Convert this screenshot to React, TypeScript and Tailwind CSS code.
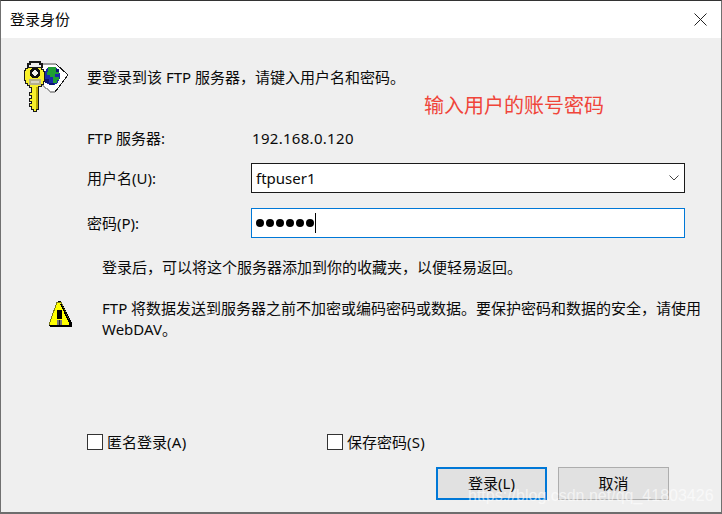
import React from "react";

const COMMA = "\uFF0C";

function KeyIcon() {
  return (
    <svg width="46" height="51" viewBox="0 0 46 51" shapeRendering="crispEdges" className="block">
      {/* diamond page behind the key */}
      <path d="M20 3 H33 L45 14 L32 31 H28 L19 24 Z" fill="#ffffff" />
      <path d="M20 3 H33 M19 24 L28 31 H32" fill="none" stroke="#a0a0a0" strokeWidth="1.5" />
      <path d="M33 3 L45 14 L32 31" fill="none" stroke="#1a1a1a" strokeWidth="1" />
      {/* globe */}
      <ellipse cx="29" cy="15" rx="8" ry="9.5" fill="#1a2aa8" />
      <path d="M25 6h8v2h3v5h-4v3h4v3h-2v3h-4v-6h-3v-2h-3v-3h1z" fill="#1f9e33" />
      <path d="M22 18h4v4h-4zM33 8h3v3h-3zM26 22h5v2h-5z" fill="#0b1470" />
      {/* ring */}
      <path d="M5 7 V3 H7 V1 H17 V3 H19 V7" fill="none" stroke="#1a1a1a" strokeWidth="2" />
      {/* key */}
      <path
        d="M4 6 H18 V8 H20 V10 H21 V20 H20 V23 H18 V25 H15 V48 H13 V50 H10 V48 H8 V45 H6 V42 H8 V40 H6 V37 H8 V34 H6 V31 H8 V26 H6 V24 H4 V22 H2 V19 H1 V9 H2 V7 H4 Z"
        fill="#f8f02a"
        stroke="#1a1a1a"
        strokeWidth="1"
      />
      <rect x="13" y="26" width="2" height="22" fill="#b8a800" />
      <rect x="6" y="18" width="12" height="6" fill="#b4b08c" />
      <rect x="8" y="20" width="8" height="2" fill="#d8d6c4" />
      {/* bow hole */}
      <circle cx="12" cy="12" r="4" fill="#f2f2ee" stroke="#111" strokeWidth="2.5" />
    </svg>
  );
}

function WarnIcon() {
  return (
    <svg width="24" height="27" viewBox="0 0 24 27" shapeRendering="crispEdges" className="block">
      <path d="M9 0 H13 L24 22 V26 H2 V25 H22 V23 L13 3 Z" fill="#000" />
      <path d="M9 1 H13 L22 22 V24 H1 V21 L2 21 Z" fill="#ffff00" stroke="#77771a" strokeWidth="1" />
      <path d="M13 2 L23 23 V25 H1 V24 H21 V22 L12 3 Z" fill="#000" />
      <rect x="9" y="9" width="5" height="9" fill="#000" />
      <rect x="9" y="19" width="5" height="5" fill="#777" />
      <rect x="11" y="19" width="1" height="5" fill="#222" />
    </svg>
  );
}

function Checkbox({ label, hint, className }: { label: string; hint: string; className: string }) {
  return (
    <div className={`flex items-center gap-[4px] ${className}`}>
      <span className="block w-[16px] h-[16px] border-[1px] border-[#333] bg-white" />
      <span>
        {label}
        <span className="tracking-[0.3px]">{hint}</span>
      </span>
    </div>
  );
}

export default function App() {
  return (
    <div
      lang="zh-CN"
      className="relative w-[722px] h-[514px] overflow-hidden bg-[#efefef] text-[15px] leading-[20px] text-[#0a0a0a] border-l border-r border-l-[#707070] border-r-[#707070] border-t border-t-[#333] border-b-[2px] border-b-[#6d6d6d]"
      style={{ fontFamily: '"Noto Sans", "Noto Sans CJK SC", sans-serif' }}
    >
      <div className="h-[37px] bg-white flex items-center justify-between pl-[9px] pr-[14px] pb-[1px]">
        <span className="text-[15px]">登录身份</span>
        <svg width="13" height="13" viewBox="0 0 13 13" className="block">
          <path d="M0.5 0.5 L12.5 12.5 M12.5 0.5 L0.5 12.5" stroke="#222" strokeWidth="1" fill="none" />
        </svg>
      </div>

      <div className="flex pl-[22px] pt-[29px] h-[56px]">
        <div className="w-[64px] shrink-0 -mt-[6px]">
          <KeyIcon />
        </div>
        <div className="whitespace-nowrap">{`要登录到该 FTP 服务器${COMMA}请键入用户名和密码。`}</div>
      </div>

      <div className="pl-[423px] h-[30px] text-[20px] leading-[30px] text-[#f0453a] mt-[-3px]">输入用户的账号密码</div>

      <div className="pl-[86px] pt-[6px] pr-[36px]">
        <div className="flex items-center h-[22px]">
          <span className="w-[165px]">FTP 服务器:</span>
          <span className="tracking-[0.3px]">192.168.0.120</span>
        </div>
        <div className="flex items-center h-[30px] mt-[14px]">
          <span className="w-[164px] pb-[1px]">用户名(U):</span>
          <div className="flex-1 h-[30px] border border-[#1a1a1a] bg-white flex items-center justify-between pl-[4px] pr-[5px]">
            <span>ftpuser1</span>
            <svg width="10" height="6" viewBox="0 0 10 6" className="block">
              <path d="M0.5 0.5 L5 5 L9.5 0.5" stroke="#444" fill="none" />
            </svg>
          </div>
        </div>
        <div className="flex items-center h-[30px] mt-[15px]">
          <span className="w-[164px] pb-[1px]">密码(P):</span>
          <div className="flex-1 h-[30px] border border-[#0078d7] bg-white flex items-center pl-[4px]">
            <span className="flex gap-[2px]">
              {[0, 1, 2, 3, 4, 5].map((i) => (
                <span key={i} className="block w-[8px] h-[8px] rounded-full bg-black" />
              ))}
            </span>
            <span className="block w-[1px] h-[20px] bg-black ml-[1px]" />
          </div>
        </div>
      </div>

      <div className="pl-[101px] mt-[19px] whitespace-nowrap">{`登录后${COMMA}可以将这个服务器添加到你的收藏夹${COMMA}以便轻易返回。`}</div>

      <div className="flex pl-[47px] mt-[21px]">
        <div className="w-[54px] shrink-0 pt-[3px]">
          <WarnIcon />
        </div>
        <div className="w-[612px] leading-[21px]">
          {`FTP 将数据发送到服务器之前不加密或编码密码或数据。要保护密码和数据的安全${COMMA}请使用 WebDAV。`}
        </div>
      </div>

      <div className="flex pl-[86px] mt-[92px]">
        <Checkbox label="匿名登录" hint="(A)" className="w-[240px]" />
        <Checkbox label="保存密码" hint="(S)" className="" />
      </div>

      <div className="flex justify-end gap-[11px] pr-[52px] mt-[15px]">
        <div className="w-[111px] h-[33px] border-[2px] border-[#0078d7] bg-[#e1e1e1] flex items-center justify-center pb-[1px]">登录(L)</div>
        <div className="w-[111px] h-[33px] border border-[#adadad] bg-[#e1e1e1] flex items-center justify-center pb-[1px]">取消</div>
      </div>

      <div
        className="absolute left-[467px] top-[485px] text-[16px] leading-[20px] whitespace-nowrap text-white/60"
        style={{ fontFamily: '"Liberation Sans", sans-serif' }}
      >
        https://blog.csdn.net/qq_41803426
      </div>
    </div>
  );
}
